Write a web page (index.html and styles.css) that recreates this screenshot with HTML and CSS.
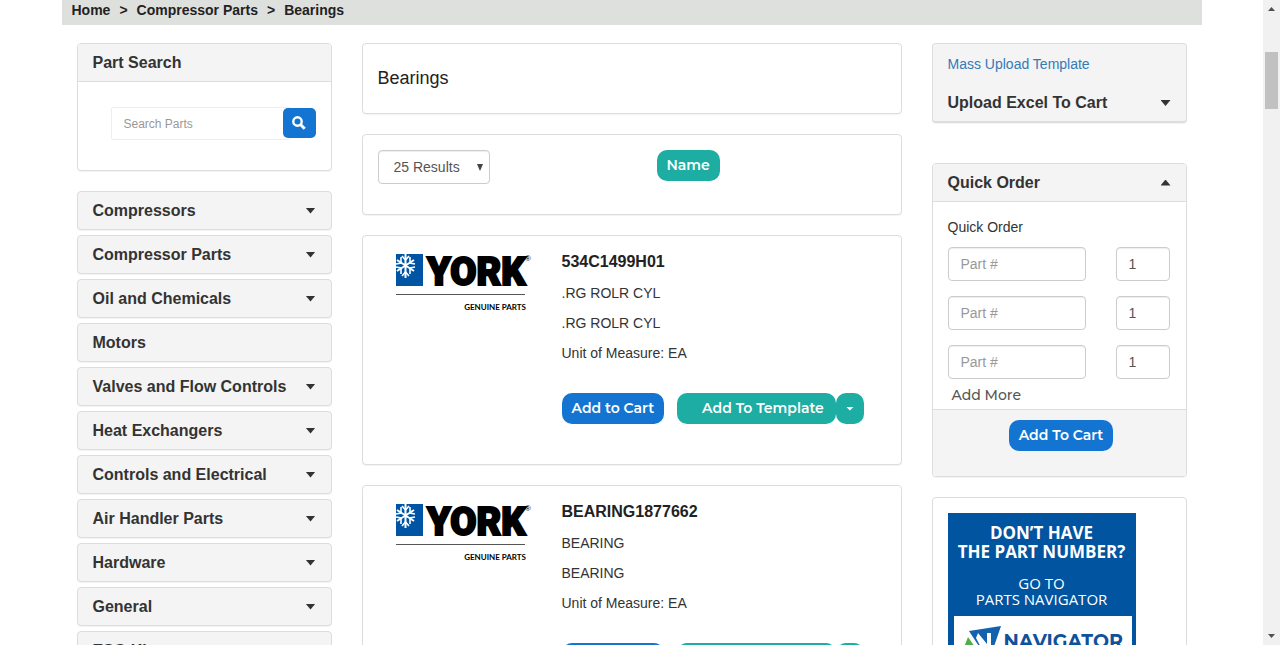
FILE: index.html
```html
<!DOCTYPE html>
<html lang="en">
<head>
<meta charset="utf-8">
<title>Bearings</title>
<link rel="stylesheet" href="styles.css">
</head>
<body>
<div class="window">
  <div class="page">
    <div class="container">
      <nav class="breadcrumb" aria-label="Breadcrumb">
        <a href="#">Home</a><span>&gt;</span><a href="#">Compressor Parts</a><span>&gt;</span><a href="#">Bearings</a>
      </nav>
      <div class="columns">
        <aside class="column">
          <section class="panel search">
            <h2 class="panel-head">Part Search</h2>
            <form class="search-form">
              <input class="search-input" type="text" placeholder="Search Parts" aria-label="Search Parts">
              <button class="search-button" type="button" aria-label="Search">
                <svg width="14" height="14" viewBox="0 0 14 14" fill="none" stroke="#fff"><circle cx="5.500" cy="5.500" r="4.200" stroke-width="2.400"/><path d="M8.500 8.500l4.200 4.200" stroke-width="3"/></svg>
              </button>
            </form>
          </section>
          <nav class="menu" aria-label="Categories">
            <button class="panel menu-item">Compressors<i class="caret"></i></button>
            <button class="panel menu-item">Compressor Parts<i class="caret"></i></button>
            <button class="panel menu-item">Oil and Chemicals<i class="caret"></i></button>
            <button class="panel menu-item">Motors</button>
            <button class="panel menu-item">Valves and Flow Controls<i class="caret"></i></button>
            <button class="panel menu-item">Heat Exchangers<i class="caret"></i></button>
            <button class="panel menu-item">Controls and Electrical<i class="caret"></i></button>
            <button class="panel menu-item">Air Handler Parts<i class="caret"></i></button>
            <button class="panel menu-item">Hardware<i class="caret"></i></button>
            <button class="panel menu-item">General<i class="caret"></i></button>
            <button class="panel menu-item">ESG Kits</button>
          </nav>
        </aside>

        <main class="column">
          <section class="panel title"><h1>Bearings</h1></section>
          <section class="panel toolbar">
            <select class="field results" aria-label="Results per page"><option>25 Results</option></select>
            <div class="sort"><button class="btn teal">Name</button></div>
          </section>
          <article class="panel product">
            <svg class="york" viewBox="0 0 140 62" role="img" aria-label="York Genuine Parts">
              <rect x="1" y="5" width="27" height="32" fill="#0054a4"/>
              <path d="M10.500 5v24M2 11l17 11M2 22l17-11" stroke="#fff" stroke-width="2"/>
              <path d="M7 7l3.500 4L14 7M7 27l3.500-4 3.500 4M1 15l5-1V8M20 18l-5 1v6M20 15l-5-1V8M1 18l5 1v6" fill="none" stroke="#fff" stroke-width="1.600"/>
              <text class="york-name" x="32" y="36">YORK</text>
              <text class="york-reg" x="130" y="12">®</text>
              <path d="M1 45.500h129" stroke="#555"/>
              <text class="york-sub" x="131" y="61" text-anchor="end">GENUINE PARTS</text>
            </svg>
            <div>
              <h3>534C1499H01</h3>
              <p>.RG ROLR CYL</p>
              <p>.RG ROLR CYL</p>
              <p>Unit of Measure: EA</p>
              <div class="actions">
                <button class="btn blue">Add to Cart</button>
                <div class="split"><button class="btn teal template">Add To Template</button><button class="btn teal toggle" aria-label="More templates"><i class="caret small"></i></button></div>
              </div>
            </div>
          </article>
          <article class="panel product">
            <svg class="york" viewBox="0 0 140 62" role="img" aria-label="York Genuine Parts">
              <rect x="1" y="5" width="27" height="32" fill="#0054a4"/>
              <path d="M10.500 5v24M2 11l17 11M2 22l17-11" stroke="#fff" stroke-width="2"/>
              <path d="M7 7l3.500 4L14 7M7 27l3.500-4 3.500 4M1 15l5-1V8M20 18l-5 1v6M20 15l-5-1V8M1 18l5 1v6" fill="none" stroke="#fff" stroke-width="1.600"/>
              <text class="york-name" x="32" y="36">YORK</text>
              <text class="york-reg" x="130" y="12">®</text>
              <path d="M1 45.500h129" stroke="#555"/>
              <text class="york-sub" x="131" y="61" text-anchor="end">GENUINE PARTS</text>
            </svg>
            <div>
              <h3>BEARING1877662</h3>
              <p>BEARING</p>
              <p>BEARING</p>
              <p>Unit of Measure: EA</p>
              <div class="actions">
                <button class="btn blue">Add to Cart</button>
                <div class="split"><button class="btn teal template">Add To Template</button><button class="btn teal toggle" aria-label="More templates"><i class="caret small"></i></button></div>
              </div>
            </div>
          </article>
        </main>

        <aside class="column">
          <section class="panel upload">
            <a href="#">Mass Upload Template</a>
            <button class="upload-toggle">Upload Excel To Cart<i class="caret"></i></button>
          </section>
          <section class="panel order">
            <button class="panel-head order-head">Quick Order<i class="caret up"></i></button>
            <div class="order-body">
              <p>Quick Order</p>
              <div class="order-row"><input class="field" placeholder="Part #" aria-label="Part number 1"><input class="field qty" value="1" aria-label="Quantity 1"></div>
              <div class="order-row"><input class="field" placeholder="Part #" aria-label="Part number 2"><input class="field qty" value="1" aria-label="Quantity 2"></div>
              <div class="order-row"><input class="field" placeholder="Part #" aria-label="Part number 3"><input class="field qty" value="1" aria-label="Quantity 3"></div>
              <button class="add-more">Add More</button>
            </div>
            <div class="order-foot"><button class="btn blue">Add To Cart</button></div>
          </section>
          <section class="panel promo">
            <a class="banner" href="#">
              <strong>DON’T HAVE<br>THE PART NUMBER?</strong>
              <span class="go">GO TO<br>PARTS NAVIGATOR</span>
              <span class="brand">
                <svg width="44" height="44" viewBox="0 0 44 44"><path d="M9 15L41 10 30 42 24 38z" fill="#1262ae"/><path d="M18 17l9 11V17h4v26h-4L16 22z" fill="#fff"/><path d="M8 21l14 20-4 2L9 34l-3 8H0z" fill="#4fae46"/></svg>
                <b>NAVIGATOR</b>
              </span>
            </a>
          </section>
        </aside>
      </div>
    </div>
  </div>
  <div class="scrollbar" aria-hidden="true"><i class="arrow up"></i><i class="thumb"></i><i class="arrow"></i></div>
</div>
</body>
</html>
```
FILE: styles.css
```css
* { box-sizing: border-box; }
body { margin: 0; background: #fff; color: #333; font: 14px/20px "Liberation Sans", Arial, sans-serif; }
h1, h2, h3, p { margin: 0; }
a { text-decoration: none; color: #337ab7; }
button, input, select { font: inherit; color: inherit; }
button { border: 0; padding: 0; background: none; }

.window { display: flex; height: 100vh; overflow: hidden; }
.page { flex: 1; min-width: 0; overflow: hidden; }
.container { max-width: 1140px; margin: 0 auto; }
.breadcrumb { display: flex; gap: 9px; height: 25px; padding: 0 10px; background: #dee0dd; color: #222; font-weight: bold; }
.breadcrumb a { color: #222; }
.columns { display: grid; grid-template-columns: 1fr 2fr 1fr; margin-top: 18px; }
.column { min-width: 0; padding: 0 15px; }

.panel { display: block; border: 1px solid #ddd; border-radius: 4px; background: #fff; box-shadow: 0 1px 1px rgba(0, 0, 0, .05); margin-bottom: 20px; }
.panel-head { height: 38px; padding: 0 15px; background: #f4f4f4; border-bottom: 1px solid #ddd; border-radius: 3px 3px 0 0; font-size: 16px; line-height: 37px; font-weight: bold; }

.caret { flex: none; width: 10px; height: 6px; background: #333; clip-path: polygon(0 0, 100% 0, 50% 100%); }
.caret.up { clip-path: polygon(50% 0, 100% 100%, 0 100%); }
.caret.small { width: 8px; height: 4px; background: #fff; }

.search-form { display: flex; align-items: center; padding: 25px 15px 30px 33px; }
.search-input { flex: 1; min-width: 0; height: 33px; margin-right: -8px; padding: 0 12px; border: 1px solid #eee; border-radius: 2px; font-size: 12px; }
::placeholder { color: #999; opacity: 1; }
.search-button { position: relative; width: 33px; height: 30px; border-radius: 5px; background: #1375d1; display: grid; place-items: center; margin-bottom: 2px; }
.menu-item { display: flex; align-items: center; justify-content: space-between; width: 100%; height: 39px; margin-bottom: 5px; padding: 0 15px; background: #f4f4f4; font-size: 16px; font-weight: bold; text-align: left; }

.title { padding: 24px 15px 25px; }
.title h1 { font-size: 18px; line-height: 20px; font-weight: normal; color: #222; }
.field { min-width: 0; height: 34px; border: 1px solid #ccc; border-radius: 4px; background: #fff; color: #555; box-shadow: inset 0 1px 1px rgba(0, 0, 0, .07); padding: 0 12px; }
.toolbar { display: grid; grid-template-columns: 1fr 1fr; padding: 15px 15px 30px; }
.results { width: 112px; padding: 0 28px 0 15px; appearance: none; background: #fff url("data:image/svg+xml,%3Csvg xmlns='http://www.w3.org/2000/svg' width='6' height='7'%3E%3Cpath d='M0 0h6L3 7z' fill='%23444'/%3E%3C/svg%3E") no-repeat right 6px center; }
.sort { padding-left: 25px; }
.btn { height: 31px; padding: 0 10px; border-radius: 10px; color: #fff; font: 600 14px/31px Montserrat, Inter, sans-serif; white-space: nowrap; }
.teal { background: #1dada3; }
.blue { background: #1375d1; }
.product { display: grid; grid-template-columns: 169px 1fr; column-gap: 15px; padding: 16px 15px 40px; }
.york { width: 140px; height: 62px; margin: -3px 0 0 17px; }
.york-name { font: 900 38px Roboto, sans-serif; stroke: #000; stroke-width: 2; }
.york-reg { font: 8px "Liberation Sans", sans-serif; }
.york-sub { font: bold 8px Lato, sans-serif; }
.product h3 { color: #222; font-size: 16px; line-height: 20px; margin-bottom: 11px; }
.product p { margin-bottom: 10px; }
.actions { display: flex; gap: 13px; margin-top: 30px; }
.split { display: flex; }
.template { padding: 0 12px 0 25px; }
.toggle { width: 28px; display: grid; place-items: center; }

.upload { padding: 10px 15px; height: 80px; margin-bottom: 40px; background: #f4f4f4; border-bottom-width: 2px; }
.upload-toggle { display: flex; align-items: center; justify-content: space-between; width: 100%; margin-top: 19px; font-size: 16px; font-weight: bold; }
.order-head { display: flex; align-items: center; justify-content: space-between; width: 100%; border-bottom: 1px solid #ddd; }
.order-body { padding: 15px 16px 4px 15px; }
.order-body p { margin-bottom: 10px; }
.order-row { display: grid; grid-template-columns: 138fr 54fr; gap: 30px; margin-bottom: 15px; }
.order-row:last-of-type { margin-bottom: 6px; }
.add-more { display: block; margin-left: 4px; color: #555; font: 500 14px/20px Montserrat, Inter, sans-serif; }
.order-foot { padding: 10px 0 25px 4px; text-align: center; background: #f4f4f4; border-top: 1px solid #ddd; border-radius: 0 0 3px 3px; }
.order-foot .btn { display: inline-block; vertical-align: top; }

.promo { padding: 15px; }
.banner { display: block; max-width: 188px; height: 250px; padding-top: 10px; background: #0054a0; color: #fff; text-align: center; white-space: nowrap; font-family: "Open Sans", "Noto Sans", sans-serif; }
.banner strong { display: block; font-size: 17px; line-height: 19px; }
.go { display: block; margin-top: 14px; font-size: 15px; line-height: 16px; }
.brand { display: flex; height: 120px; margin: 9px 4px 0 6px; background: #fff; overflow: hidden; padding-left: 6px; }
.brand b { color: #0f519c; font: 700 19px/24px Montserrat, Inter, sans-serif; margin-top: 14px; }

.scrollbar { position: relative; flex: none; width: 17px; background: #f1f1f1; display: flex; flex-direction: column; align-items: center; }
.thumb { width: 13px; height: 57px; margin-top: 41px; background: #c1c1c1; }
.arrow { width: 7px; height: 4px; background: #505050; clip-path: polygon(0 0, 100% 0, 50% 100%); margin: auto 0 7px; }
.arrow.up { margin: 7px 0 0; clip-path: polygon(50% 0, 100% 100%, 0 100%); }
```
